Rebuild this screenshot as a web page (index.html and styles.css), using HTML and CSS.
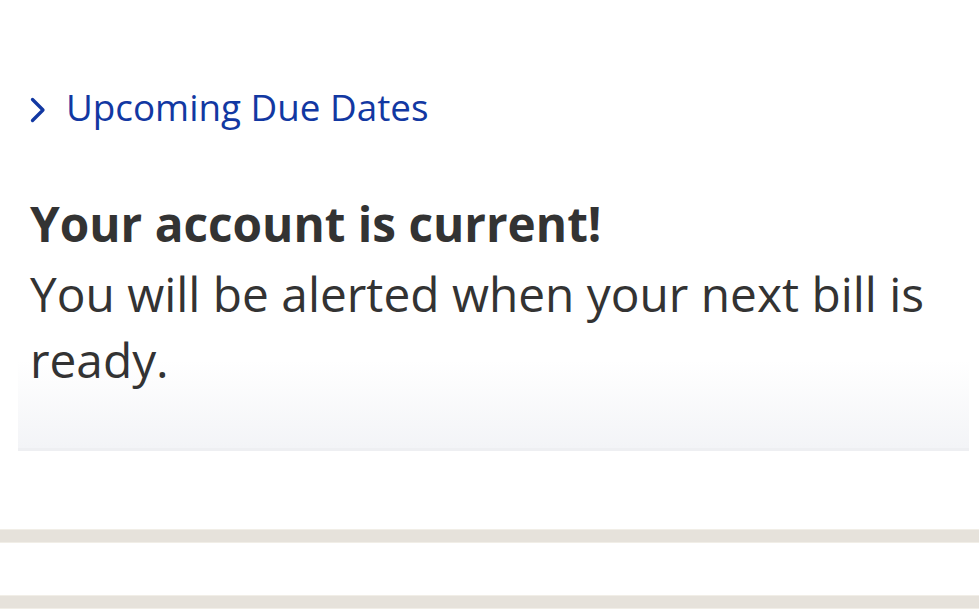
FILE: index.html
```html
<!DOCTYPE html>
<html lang="en">
<head>
<meta charset="utf-8">
<link rel="stylesheet" href="styles.css">
</head>
<body>
<main class="page">
  <section class="card">
    <a class="due-link" href="#">
      <svg class="chev" width="16" height="26" viewBox="0 0 16 26" aria-hidden="true"><path d="M2.5 2.5 L13 13 L2.5 23.5" fill="none" stroke="#1238a2" stroke-width="3.3" stroke-linecap="round" stroke-linejoin="round"/></svg>
      <span>Upcoming Due Dates</span>
    </a>
    <h2 class="title">Your account is current!</h2>
    <p class="msg">You will be alerted when your next bill is ready.</p>
  </section>
  <div class="gap1"></div>
  <div class="bar"></div>
  <div class="gap2"></div>
  <div class="bar"></div>
</main>
</body>
</html>
```
FILE: styles.css
```css
* { box-sizing: border-box; }
html, body { margin: 0; padding: 0; background: #fff; }
body { font-family: "Open Sans", "Noto Sans", sans-serif; color: #333; }
.page { width: 979px; }
.card {
  margin: 0 10px 0 18px;
  padding: 84px 0 55px 12px;
  background: linear-gradient(to bottom, #fff 0, #fff 360px, #f3f4f7 448px);
  border-bottom: 3px solid #eeeff2;
}
.due-link {
  display: flex;
  align-items: center;
  gap: 20px;
  color: #1238a2;
  text-decoration: none;
  font-size: 36.8px;
  line-height: 46px;
}
.chev { flex: none; margin-top: 5px; }
.title {
  margin: 62px 0 0;
  font-size: 47.7px;
  font-weight: 700;
  line-height: 64px;
}
.msg {
  margin: 5px 0 0;
  font-size: 47.8px;
  line-height: 66px;
  padding-right: 10px;
}
.gap1 { height: 78px; }
.bar {
  height: 14px;
  background: #e6e2db;
  border-top: 1px solid #f1eee7;
  border-bottom: 1px solid #f1eee7;
}
.gap2 { height: 52px; }
```
